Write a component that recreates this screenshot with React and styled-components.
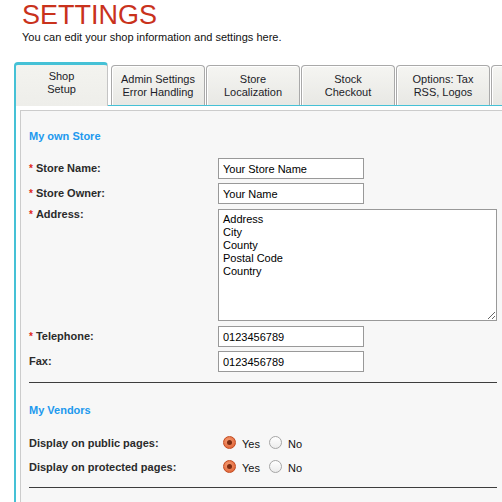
import styled, { createGlobalStyle } from 'styled-components'

const GlobalStyle = createGlobalStyle`
    body {
        margin:0;
        background:#fff;
        font-family:"Liberation Sans", Arial, sans-serif;
        overflow:hidden;
    }
`
const Page = styled.div`
    width:502px;
    height:502px;
    overflow:hidden;
`
const Header = styled.div`
    padding:2px 0 0 22px;
`
const Title = styled.h1`
    margin:0;
    font-size:27px;
    line-height:27px;
    font-weight:normal;
    color:#c9321c;
`
const Sub = styled.div`
    margin-top:2px;
    font-size:11px;
    line-height:13px;
    color:#111;
`
const TabBar = styled.div`
    margin:18px 0 0 14px;
    height:44px;
    display:flex;
    align-items:flex-end;
    background:linear-gradient(to top, #45c1d6 1px, transparent 1px);
`
const Tab = styled.div`
    box-sizing:border-box;
    width:94px;
    flex-shrink:0;
    font-size:11px;
    line-height:13px;
    text-align:center;
    color:#1c1c28;
    border-radius:4px 4px 0 0;
    ${p => p.active ? `
        height:44px;
        margin-right:3px;
        border-top:3px solid #45c1d6;
        border-left:2px solid #45c1d6;
        border-right:1px solid #c4c4c4;
        padding-top:5px;
        background:linear-gradient(#f3f3ef, #eeeeea);
        position:relative;
    ` : `
        height:40px;
        margin:0 1px 1px 0;
        border:1px solid #a9a9a9;
        border-bottom:none;
        padding-top:7px;
        background:linear-gradient(#f5f5f2, #e8e8e4);
        box-shadow:inset 1px 1px 0 #fff;
    `}
`
const Panel = styled.div`
    margin-left:14px;
    border-left:2px solid #45c1d6;
    padding:4px 0 0 4px;
    background:#fff;
`
const Box = styled.div`
    border:1px solid #cccccc;
    border-right:none;
    background:#f7f7f7;
    padding:19px 0 20px 8px;
    height:400px;
`
const Content = styled.div`
    width:468px;
`
const Heading = styled.div`
    font-size:11px;
    line-height:13px;
    font-weight:bold;
    color:#2199ee;
    margin-bottom:${p => p.gap}px;
`
const Fields = styled.div`
    display:flex;
    flex-direction:column;
    gap:4px;
`
const Row = styled.div`
    display:flex;
    align-items:${p => p.top ? 'flex-start' : 'center'};
    margin:${p => p.top ? '1px 0' : '0'};
`
const Label = styled.div`
    width:189px;
    flex-shrink:0;
    font-size:11px;
    line-height:13px;
    font-weight:bold;
    color:#2b2b2b;
    margin-top:${p => p.top ? '-1px' : '0'};
`
const Star = styled.span`
    color:#e0261b;
    font-size:10px;
    margin-right:3px;
`
const Input = styled.input`
    box-sizing:border-box;
    width:146px;
    height:21px;
    border:1px solid #999;
    padding:0 0 0 4px;
    font-family:"Liberation Sans", Arial, sans-serif;
    font-size:11px;
    color:#000;
    background:#fff;
    outline:none;
`
const Area = styled.textarea`
    box-sizing:border-box;
    width:279px;
    height:112px;
    border:1px solid #999;
    padding:3px 4px;
    font-family:"Liberation Sans", Arial, sans-serif;
    font-size:11px;
    line-height:13px;
    color:#000;
    background:#fff;
    outline:none;
    margin:0;
`
const Divider = styled.div`
    height:1px;
    background:#3d3d3d;
    margin:${p => p.top}px 0 ${p => p.bottom}px;
`
const RadioRow = styled.div`
    display:flex;
    align-items:center;
    height:24px;
`
const RadioGroup = styled.div`
    display:flex;
    align-items:center;
    margin-left:5px;
`
const Radio = styled.span`
    box-sizing:border-box;
    width:13px;
    height:13px;
    border-radius:50%;
    position:relative;
    margin-top:-2px;
    ${p => p.checked ? `
        background:radial-gradient(circle at 40% 35%, #f59b72, #dc5a2c);
        border:1px solid #c24a1f;
        &::after {
            content:"";
            position:absolute;
            left:3px; top:3px;
            width:5px; height:5px;
            border-radius:50%;
            background:#7c2c12;
        }
    ` : `
        background:linear-gradient(#ffffff, #ececec);
        border:1px solid #a6a6a6;
    `}
`
const RadioText = styled.span`
    font-size:11px;
    line-height:13px;
    color:#111;
    margin:3px 9px 0 6px;
`

const fields = [
    { label: 'Store Name:', value: 'Your Store Name', req: true },
    { label: 'Store Owner:', value: 'Your Name', req: true },
    { label: 'Address:', value: 'Address\nCity\nCounty\nPostal Code\nCountry', req: true, area: true },
    { label: 'Telephone:', value: '0123456789', req: true },
    { label: 'Fax:', value: '0123456789' },
]

// last tab is cut off by the window edge, only its frame shows
const tabs = [
    ['Shop', 'Setup'],
    ['Admin Settings', 'Error Handling'],
    ['Store', 'Localization'],
    ['Stock', 'Checkout'],
    ['Options: Tax', 'RSS, Logos'],
    ['', ''],
]

const App = () => {
    return (
        <Page>
            <GlobalStyle />
            <Header>
                <Title>SETTINGS</Title>
                <Sub>You can edit your shop information and settings here.</Sub>
            </Header>
            <TabBar>
                {tabs.map((t, i) => (
                    <Tab key={i} active={i === 0}>{t[0]}<br />{t[1]}</Tab>
                ))}
            </TabBar>
            <Panel>
                <Box>
                    <Content>
                        <Heading gap={15}>My own Store</Heading>
                        <Fields>
                            {fields.map(f => (
                                <Row key={f.label} top={f.area}>
                                    <Label top={f.area}>
                                        {f.req && <Star>*</Star>}{f.label}
                                    </Label>
                                    {f.area
                                        ? <Area defaultValue={f.value} />
                                        : <Input defaultValue={f.value} />}
                                </Row>
                            ))}
                        </Fields>
                        <Divider top={10} bottom={21} />
                        <Heading gap={14}>My Vendors</Heading>
                        {['Display on public pages:', 'Display on protected pages:'].map(l => (
                            <RadioRow key={l}>
                                <Label>{l}</Label>
                                <RadioGroup>
                                    <Radio checked />
                                    <RadioText>Yes</RadioText>
                                    <Radio />
                                    <RadioText>No</RadioText>
                                </RadioGroup>
                            </RadioRow>
                        ))}
                        <Divider top={8} bottom={0} />
                    </Content>
                </Box>
            </Panel>
        </Page>
    )
}

export default App
